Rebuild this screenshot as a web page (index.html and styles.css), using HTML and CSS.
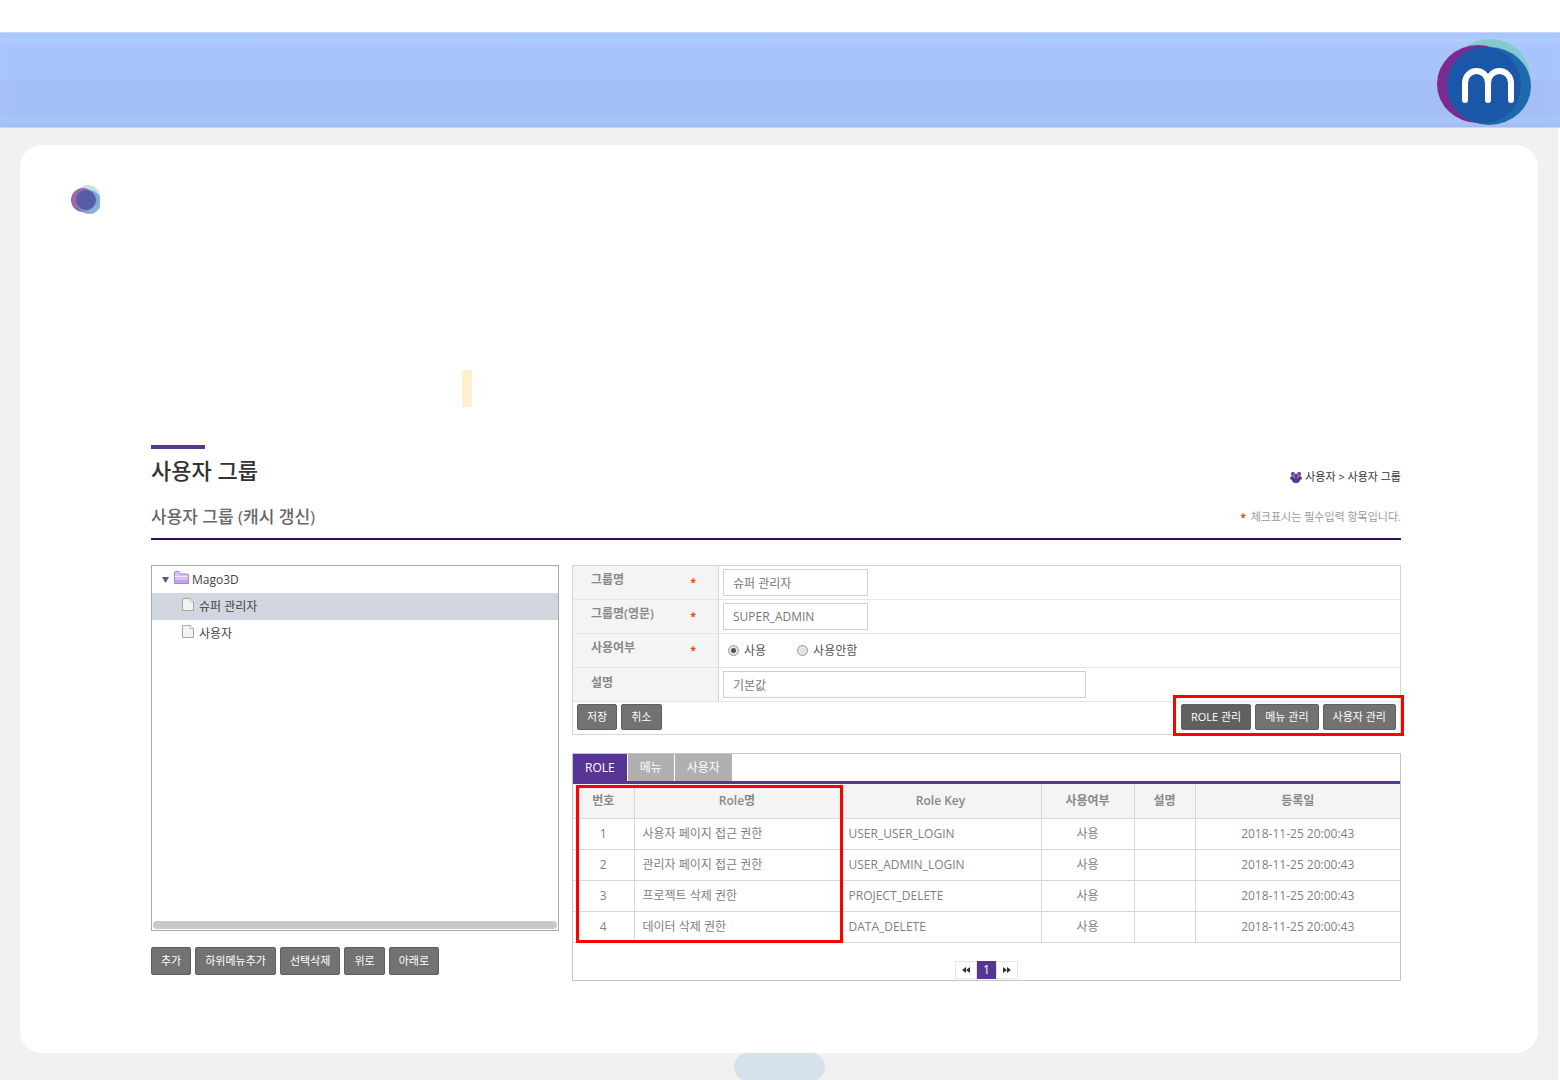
FILE: index.html
```html
<!DOCTYPE html>
<html lang="ko">
  <head>
    <title>사용자 그룹</title>
    <meta charset="utf-8" />
    <meta name="viewport" content="width=device-width, initial-scale=1.0" />
    <link rel="stylesheet" href="styles.css">
  </head>
  <body>
    <header class="banner">
      <svg class="logo" width="96" height="88" viewBox="0 0 96 88">
        <ellipse cx="54" cy="41" rx="41" ry="41" fill="#82cccf" />
        <ellipse cx="42" cy="45" rx="41" ry="39" fill="#7a2b90" />
        <ellipse cx="53" cy="47" rx="42" ry="39" fill="#1e68ae" />
        <ellipse cx="48" cy="46" rx="37" ry="38" fill="#1a57a8" />
        <path d="M29 61V44a11.500 12 0 0 1 23 0V61M52 44a11.500 12 0 0 1 23 0V61" fill="none" stroke="#fff" stroke-width="6" stroke-linecap="round" />
      </svg>
    </header>

    <div class="page">
      <main class="card">
        <svg class="dot" width="29" height="29" viewBox="0 0 29 29">
          <circle cx="17" cy="12" r="12" fill="#bfe4e5" />
          <circle cx="12" cy="15" r="12" fill="#a065b0" />
          <circle cx="18" cy="17" r="12" fill="#6b9fce" opacity=".8" />
          <circle cx="15" cy="15" r="10" fill="#555da8" />
        </svg>
        <div class="mark"></div>

        <div class="content">
          <div class="title-row">
            <h1>사용자 그룹</h1>
            <div class="location">
              <svg width="12" height="11" viewBox="0 0 12 11" fill="#573592">
                <circle cx="3" cy="2" r="2" />
                <circle cx="9" cy="2" r="2" />
                <path d="M0 7q0-3 3-3h6q3 0 3 3l-2 1H2z" />
                <circle cx="6" cy="4" r="2.500" stroke="#fff" stroke-width=".5" />
                <path d="M2 8q0-2 4-2t4 2q0 3-4 3T2 8" />
              </svg>
              <span>사용자 &gt; 사용자 그룹</span>
            </div>
          </div>
          <div class="sub-row">
            <h2>사용자 그룹 (캐시 갱신)</h2>
            <p><span class="required">*</span> 체크표시는 필수입력 항목입니다.</p>
          </div>

          <div class="columns">
            <section>
              <div class="tree">
                <ul>
                  <li class="root">
                    <svg width="7" height="6" viewBox="0 0 7 6"><path d="M0 0h7L3.500 6z" fill="#56606c" /></svg>
                    <svg class="folder" width="15" height="14" viewBox="0 0 15 14">
                      <path d="M.5 12.500V2q0-1.500 1.500-1.500h3L6.500 3h7q1 0 1 1v8.500z" fill="#d9c2f5" stroke="#a981dc" />
                      <path d="M1 5.500h13" stroke="#f0e5fc" />
                      <path d="M1 9h13v3H1z" fill="#c4a2ee" />
                    </svg>
                    Mago3D
                  </li>
                  <li class="leaf selected">
                    <svg width="12" height="13" viewBox="0 0 12 13"><path d="M.5.500h8l3 3v9H.5z" fill="#f3f3f3" stroke="#a5a5a5" /><path d="M8.500.500v3h3" fill="#fff" stroke="#bbb" /></svg>
                    슈퍼 관리자
                  </li>
                  <li class="leaf">
                    <svg width="12" height="13" viewBox="0 0 12 13"><path d="M.5.500h8l3 3v9H.5z" fill="#f3f3f3" stroke="#a5a5a5" /><path d="M8.500.500v3h3" fill="#fff" stroke="#bbb" /></svg>
                    사용자
                  </li>
                </ul>
                <div class="scrollbar"></div>
              </div>
              <div class="tree-buttons">
                <button type="button">추가</button>
                <button type="button">하위메뉴추가</button>
                <button type="button">선택삭제</button>
                <button type="button">위로</button>
                <button type="button">아래로</button>
              </div>
            </section>

            <section>
              <form class="group-form">
                <table class="fields">
                  <tr>
                    <th><label for="groupName">그룹명</label><span class="required">*</span></th>
                    <td><input type="text" id="groupName" value="슈퍼 관리자" /></td>
                  </tr>
                  <tr>
                    <th><label for="groupNameEn">그룹명(영문)</label><span class="required">*</span></th>
                    <td><input type="text" id="groupNameEn" value="SUPER_ADMIN" /></td>
                  </tr>
                  <tr>
                    <th>사용여부<span class="required">*</span></th>
                    <td>
                      <div class="radios">
                        <input type="radio" name="useYn" id="useY" checked /><label for="useY">사용</label>
                        <input type="radio" name="useYn" id="useN" /><label for="useN">사용안함</label>
                      </div>
                    </td>
                  </tr>
                  <tr>
                    <th><label for="description">설명</label></th>
                    <td><input type="text" id="description" class="wide" value="기본값" /></td>
                  </tr>
                </table>
                <div class="form-buttons">
                  <button type="button">저장</button>
                  <button type="button">취소</button>
                  <div class="manage">
                    <button type="button" class="active">ROLE 관리</button>
                    <button type="button">메뉴 관리</button>
                    <button type="button">사용자 관리</button>
                  </div>
                </div>
              </form>

              <div class="tab-panel">
                <div class="tabs">
                  <button type="button" class="on">ROLE</button>
                  <button type="button">메뉴</button>
                  <button type="button">사용자</button>
                </div>
                <div class="role-list">
                  <table>
                    <colgroup>
                      <col class="col-number" />
                      <col class="col-name" />
                      <col class="col-key" />
                      <col class="col-use" />
                      <col class="col-desc" />
                      <col class="col-date" />
                    </colgroup>
                    <thead>
                      <tr>
                        <th>번호</th>
                        <th>Role명</th>
                        <th>Role Key</th>
                        <th>사용여부</th>
                        <th>설명</th>
                        <th>등록일</th>
                      </tr>
                    </thead>
                    <tbody>
                      <tr>
                        <td>1</td>
                        <td class="left">사용자 페이지 접근 권한</td>
                        <td class="left">USER_USER_LOGIN</td>
                        <td>사용</td>
                        <td></td>
                        <td>2018-11-25 20:00:43</td>
                      </tr>
                      <tr>
                        <td>2</td>
                        <td class="left">관리자 페이지 접근 권한</td>
                        <td class="left">USER_ADMIN_LOGIN</td>
                        <td>사용</td>
                        <td></td>
                        <td>2018-11-25 20:00:43</td>
                      </tr>
                      <tr>
                        <td>3</td>
                        <td class="left">프로젝트 삭제 권한</td>
                        <td class="left">PROJECT_DELETE</td>
                        <td>사용</td>
                        <td></td>
                        <td>2018-11-25 20:00:43</td>
                      </tr>
                      <tr>
                        <td>4</td>
                        <td class="left">데이터 삭제 권한</td>
                        <td class="left">DATA_DELETE</td>
                        <td>사용</td>
                        <td></td>
                        <td>2018-11-25 20:00:43</td>
                      </tr>
                    </tbody>
                  </table>
                </div>
                <nav class="paging">
                  <a href="#" aria-label="이전"><svg width="8" height="6" viewBox="0 0 8 6"><path d="M4 0v6L0 3zM8 0v6L4 3z" fill="#333" /></svg></a>
                  <a href="#" class="current">1</a>
                  <a href="#" aria-label="다음"><svg width="8" height="6" viewBox="0 0 8 6"><path d="M0 0v6l4-3zM4 0v6l4-3z" fill="#333" /></svg></a>
                </nav>
              </div>
            </section>
          </div>
        </div>
      </main>

      <footer><div class="page-number"></div></footer>
    </div>
  </body>
</html>
```

FILE: styles.css
```css
*,
*::before,
*::after {
  box-sizing: border-box;
}

body {
  margin: 0;
  min-height: 100vh;
  display: flex;
  flex-direction: column;
  padding-top: 32px;
  background: #fff;
  color: #808080;
  font-family: "Open Sans", "Noto Sans CJK KR", sans-serif;
  font-size: 12px;
  line-height: 16px;
}

h1,
h2,
p,
ul {
  margin: 0;
  padding: 0;
}

input,
button {
  font: inherit;
}

.banner {
  height: 96px;
  padding: 6px 28px 0 0;
  display: flex;
  justify-content: flex-end;
  border: 1px solid #c5d6f8;
  border-width: 1px 0;
  background: linear-gradient(#a8c4fc, #aeccfd 8%, #a9c4fd 16%, #a9c4fd 50%, #a4bef6 50%, #a4bef6 86%, #a8c6f8 92%, #a1bcf5);
  box-shadow: inset 9px 0 #b0c8ff33, inset -9px 0 #b0c8ff33;
}

.page {
  flex: 1;
  display: flex;
  flex-direction: column;
  margin-right: 2px;
  padding: 17px 20px 0;
  background: #f1f1f1;
}

.card {
  flex: 1;
  padding: 40px 137px 72px 51px;
  background: #fff;
  border-radius: 22px;
}

.dot {
  display: block;
}

.mark {
  width: 10px;
  height: 37px;
  margin: 156px 0 38px 391px;
  background: #fff0cd;
}

.content {
  margin-left: 80px;
}

.title-row,
.sub-row {
  display: flex;
  justify-content: space-between;
}

.title-row::before {
  content: "";
  position: absolute;
  width: 54px;
  height: 4px;
  background: #573592;
}

h1 {
  padding-top: 9px;
  color: #333;
  font-size: 22px;
  line-height: 32px;
  font-weight: 500;
}

.location {
  display: flex;
  align-items: center;
  gap: 3px;
  padding-top: 23px;
  color: #333;
  font-size: 11px;
}

.sub-row {
  align-items: center;
  height: 54px;
  padding-top: 10px;
  margin-bottom: 25px;
  border-bottom: 2px solid #3a0861;
}

h2 {
  color: #666;
  font-size: 17px;
  line-height: 24px;
  font-weight: 500;
}

.sub-row p {
  color: #999;
  font-size: 11px;
}

.required {
  color: #e84c00;
  font-size: 10px;
  font-weight: bold;
}

.sub-row .required {
  margin-right: 2px;
}

.columns {
  display: grid;
  grid-template-columns: 408px 1fr;
  gap: 13px;
}

.tree {
  height: 366px;
  display: flex;
  flex-direction: column;
  justify-content: space-between;
  border: 1px solid #aaa;
  color: #444;
}

.tree ul {
  list-style: none;
}

.tree li {
  display: flex;
  align-items: center;
  height: 27px;
}

.root {
  gap: 5px;
  padding-left: 10px;
}

.tree .root .folder {
  margin: 0 -2px 4px 0;
}

.leaf {
  gap: 5px;
  padding-left: 30px;
}

.leaf svg {
  margin-bottom: 4px;
}

.selected {
  background: #d0d7de;
}

.scrollbar {
  height: 8px;
  margin: 0 1px 1px;
  border-radius: 4px;
  background: #c9c9c9;
}

button {
  height: 26px;
  padding: 0 9px;
  border: 1px solid #5f5f5f;
  border-radius: 2px;
  background: #727272;
  color: #fff;
  font-size: 11px;
  white-space: nowrap;
}

.tree-buttons {
  display: flex;
  gap: 4px;
  margin-top: 16px;
}

.tree-buttons button {
  height: 28px;
}

.group-form {
  border: 1px solid #d5d5d5;
}

.fields {
  width: 100%;
  border-spacing: 0;
}

.fields th,
.fields td {
  height: 34px;
  border-bottom: 1px solid #e5e5e5;
}

.fields th {
  width: 146px;
  padding: 0 22px 3px 18px;
  border-right: 1px solid #d5d5d5;
  background: #f4f4f4;
  color: #888;
  text-align: left;
  font-weight: 600;
}

.fields th .required {
  float: right;
  padding-top: 2px;
}

.fields td {
  padding: 0 4px;
}

.fields input[type="text"] {
  display: block;
  width: 145px;
  height: 27px;
  padding: 0 9px;
  border: 1px solid #d0d0d0;
  color: #777;
}

.fields input.wide {
  width: 363px;
}

.radios {
  display: flex;
  align-items: center;
  padding-left: 5px;
  color: #555;
}

.radios input {
  appearance: none;
  width: 11px;
  height: 11px;
  margin: 0 5px 0 0;
  border: 1px solid #999;
  border-radius: 50%;
  background: #e4e4e4;
}

.radios input:checked {
  background: radial-gradient(#555 2px, #e4e4e4 3px);
}

.radios label {
  margin-right: 31px;
}

.form-buttons {
  display: flex;
  gap: 4px;
  padding: 2px 4px 4px;
}

.manage {
  position: relative;
  display: flex;
  gap: 4px;
  margin-left: auto;
}

.manage .active {
  background: #606060;
}

/* red callouts drawn over the screen */
.manage::after,
.role-list::after {
  content: "";
  position: absolute;
  border: 3px solid #f00;
  pointer-events: none;
}

.manage::after {
  inset: -9px -8px -6px -8px;
}

.tab-panel {
  margin-top: 18px;
  border: 1px solid #c5c5c5;
}

.tabs {
  display: flex;
  gap: 1px;
  border-bottom: 3px solid #573592;
}

.tabs button {
  height: 27px;
  padding: 0 12px;
  border: 0;
  border-radius: 0;
  background: #b0b0b0;
  font-size: 12px;
}

.tabs .on {
  background: #573592;
}

.role-list {
  position: relative;
}

.role-list::after {
  top: 1px;
  bottom: 0;
  left: 3px;
  width: 267px;
}

.role-list table {
  width: 100%;
  table-layout: fixed;
  border-collapse: collapse;
}

.col-number {
  width: 61px;
}

.col-name {
  width: 206px;
}

.col-key {
  width: 201px;
}

.col-use {
  width: 93px;
}

.col-desc {
  width: 61px;
}

.role-list th,
.role-list td {
  height: 31px;
  padding: 0 8px;
  border: 1px solid #d8d8d8;
  border-width: 0 1px 1px 0;
  text-align: center;
}

.role-list th:last-child,
.role-list td:last-child {
  border-right: 0;
}

.role-list th {
  height: 34px;
  background: #f4f4f4;
  color: #888;
  font-weight: 600;
}

.role-list .left {
  text-align: left;
}

.paging {
  display: flex;
  justify-content: center;
  padding: 18px 0 1px;
}

.paging a {
  display: flex;
  align-items: center;
  justify-content: center;
  width: 22px;
  height: 18px;
  border: 1px solid #e5e5e5;
  color: #333;
  text-decoration: none;
}

.paging .current {
  width: 19px;
  border: 0;
  background: #573592;
  color: #fff;
}

footer {
  height: 27px;
  overflow: hidden;
}

.page-number {
  width: 91px;
  height: 28px;
  margin: auto;
  border-radius: 14px;
  background: #d5e1ed;
}
```
